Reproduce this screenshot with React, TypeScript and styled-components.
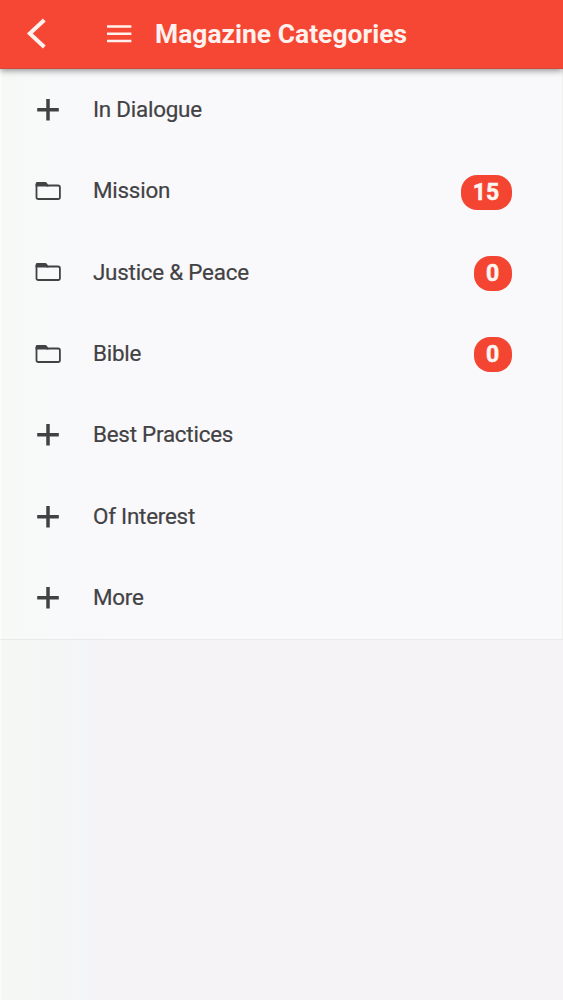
import React from 'react';
import styled, { createGlobalStyle } from 'styled-components';

const GlobalStyle = createGlobalStyle`
  * { box-sizing: border-box; }
  body {
    margin: 0;
    font-family: Roboto, "Liberation Sans", sans-serif;
    color: #424244;
  }
`;

const Screen = styled.div`
  display: flex;
  flex-direction: column;
  height: 1000px;
  overflow: hidden;
  background: linear-gradient(90deg, #fafbfa 1px, #f4f7f3 2px, #f3f6f5 60px, #f4f5f8 86px, #f5f3f6 98px);
`;

const Header = styled.header`
  display: flex;
  align-items: center;
  flex: none;
  height: 69px;
  padding-left: 26px;
  background: #f54733;
  border-bottom: 1px solid #d34a3a;
  box-shadow: 0 1px 7px rgba(0, 0, 0, 0.5);
  z-index: 1;
`;

const IconButton = styled.button<{ $gap: number }>`
  display: flex;
  margin: 0 ${(p) => p.$gap}px 0 0;
  padding: 0;
  border: 0;
  background: none;
  color: #fff1ed;
`;

const Title = styled.h1`
  margin: 0;
  font-size: 26.4px;
  line-height: 34px;
  font-weight: 700;
  letter-spacing: 0.03px;
  color: #fff1ed;
  white-space: nowrap;
`;

const List = styled.ul`
  flex: none;
  margin: 0;
  padding: 0;
  list-style: none;
  background: linear-gradient(90deg, #fcfdfc 1px, #f7f9f7 2px, #f8f9fa 60px, #f9f8fa 110px);
  border-bottom: 1px solid #e9e9eb;
  border-right: 1px solid #f0f0f1;
`;

const Row = styled.li`
  display: flex;
  align-items: center;
  height: 81.4px;
  padding: 0 50.5px 0 34px;
`;

const Label = styled.span`
  flex: 1;
  margin: -1.8px 0 0 31px;
  font-size: 22.4px;
  line-height: 30px;
  letter-spacing: -0.23px;
  -webkit-text-stroke: 0.2px currentColor;
`;

const Badge = styled.span`
  height: 35px;
  margin-top: 2.2px;
  padding: 0 12.3px;
  border-radius: 16px;
  background: #f44532;
  color: #fff5f1;
  font-size: 23px;
  line-height: 35px;
  font-weight: 700;
  -webkit-text-stroke: 0.5px currentColor;
`;

const BackIcon = () => (
  <svg width="20" height="32" viewBox="0 0 20 32" fill="none" stroke="currentColor" strokeWidth="4">
    <path d="M18.3 2 3.8 15.5 18.3 29" />
  </svg>
);

const MenuIcon = () => (
  <svg width="26" height="20" viewBox="0 0 26 20" fill="none" stroke="currentColor" strokeWidth="2.5">
    <path d="M1 2.6h24.4M1 9.8h24.4M1 17h24.4" />
  </svg>
);

const PlusIcon = () => (
  <svg width="28" height="28" viewBox="0 0 28 28" fill="none" stroke="currentColor" strokeWidth="3.5">
    <path d="M3.2 13.7h21.6M14 2.9v21.6" />
  </svg>
);

const FolderIcon = () => (
  <svg width="28" height="28" viewBox="0 0 28 28" fill="none" stroke="currentColor" strokeWidth="1.8">
    <path d="M2.5 8V7.2Q2.5 5.8 4 5.8H10.5Q12 5.8 12.5 7.2L13.2 8.5H24Q25.9 8.5 25.9 10.3V20.2Q25.9 22 24 22H4.4Q2.5 22 2.5 20.2Z" />
    <path d="M2.5 8.5V7.2Q2.5 5.8 4 5.8H10.5Q12 5.8 12.5 7.2L13.2 8.5Z" fill="currentColor" />
  </svg>
);

type Category = { name: string; count?: number };

const categories: Category[] = [
  { name: 'In Dialogue' },
  { name: 'Mission', count: 15 },
  { name: 'Justice & Peace', count: 0 },
  { name: 'Bible', count: 0 },
  { name: 'Best Practices' },
  { name: 'Of Interest' },
  { name: 'More' },
];

export default function App() {
  return (
    <Screen>
      <GlobalStyle />
      <Header>
        <IconButton $gap={60} aria-label="Back"><BackIcon /></IconButton>
        <IconButton $gap={23} aria-label="Menu"><MenuIcon /></IconButton>
        <Title>Magazine Categories</Title>
      </Header>
      <List>
        {categories.map(({ name, count }) => (
          <Row key={name}>
            {count === undefined ? <PlusIcon /> : <FolderIcon />}
            <Label>{name}</Label>
            {count !== undefined && <Badge>{count}</Badge>}
          </Row>
        ))}
      </List>
    </Screen>
  );
}
